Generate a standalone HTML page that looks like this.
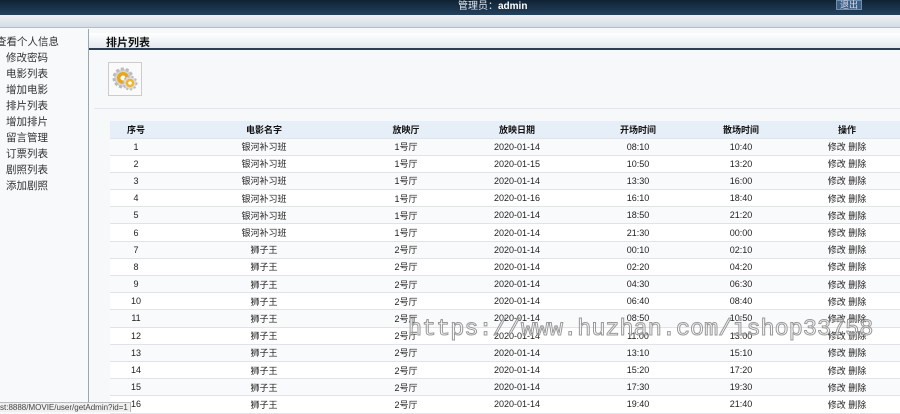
<!DOCTYPE html>
<html><head><meta charset="utf-8"><style>
*{margin:0;padding:0;box-sizing:border-box}
body{width:900px;height:412px;overflow:hidden;background:#f6f8fa;font-family:"Liberation Sans","Noto Sans CJK SC",sans-serif;position:relative;color:#222}
.top{position:absolute;left:0;top:0;width:900px;height:15px;background:linear-gradient(#0f2233,#24425e);}
.top .adm{position:absolute;left:458px;top:0;font-size:10px;color:#dfe6ee;line-height:13px}
.top .adm b{color:#fff}
.top .out{position:absolute;left:836px;top:0;width:26px;height:10px;background:#3b5f85;border:1px solid #6f8fad;color:#dde;font-size:9px;line-height:8px;text-align:center}
.band{position:absolute;left:0;top:15px;width:900px;height:13px;background:linear-gradient(#eef2f6,#d4dbe3);border-bottom:1px solid #b5bec8}
.side{position:absolute;left:0;top:29px;width:89px;height:383px;background:#f7f9fb;border-right:1px solid #9aa6b2;padding-top:5px}
.side div{font-size:10.5px;line-height:16px;color:#333;padding-left:6px}
.side div:first-child{padding-left:0;margin-left:-4px}
.ph{position:absolute;left:89px;top:33px;width:811px;height:17px;background:linear-gradient(#fff,#e4eaf0);border-bottom:2px solid #2c3e50}
.ph span{position:absolute;left:17px;top:1px;font-size:11px;font-weight:bold;color:#111}
.icon{position:absolute;left:108px;top:62px;width:34px;height:34px;border:1px solid #ccc;background:#fafafa}
.hr{position:absolute;left:94px;top:108px;width:806px;height:1px;background:#e2e6ea}
table{position:absolute;left:110px;top:121px;width:790px;border-collapse:collapse;table-layout:fixed;font-size:9px}
td,th{text-align:center;height:17.2px;border-bottom:1px solid #e0e4e8;background:#fff;padding:0;white-space:nowrap}
th{background:#e6eef7;font-weight:bold;height:17px;color:#111}
tr:nth-child(even) td{background:#f9fafb}
.wm{position:absolute;left:408px;top:316px;font-family:"Liberation Mono",monospace;font-size:23.5px;color:rgba(255,255,255,0.3);-webkit-text-stroke:1px #999;white-space:nowrap}
.st{position:absolute;left:0;top:402px;width:131px;height:10px;background:#f0f0f0;border:1px solid #bbb;border-left:none;border-bottom:none;font-size:8px;line-height:9px;color:#444;white-space:nowrap;overflow:hidden}
</style></head><body>
<div class="top"><div class="adm">管理员：<b>admin</b></div><div class="out">退出</div></div>
<div class="band"></div>
<div class="side">
<div>查看个人信息</div><div>修改密码</div><div>电影列表</div><div>增加电影</div><div>排片列表</div><div>增加排片</div><div>留言管理</div><div>订票列表</div><div>剧照列表</div><div>添加剧照</div>
</div>
<div class="ph"><span>排片列表</span></div>
<div class="icon"><svg width="34" height="34" viewBox="0 0 34 34"><circle cx="14" cy="15" r="9" fill="#d6d6d6" stroke="#bbb" stroke-dasharray="3 2" stroke-width="3"/><circle cx="14" cy="15" r="6" fill="#e9a51c"/><circle cx="14" cy="15" r="2.5" fill="#fff"/><circle cx="21" cy="20" r="6.5" fill="#ddd" stroke="#bbb" stroke-dasharray="2 2" stroke-width="2"/><circle cx="21" cy="20" r="4.3" fill="#f0b52a"/><circle cx="21" cy="20" r="1.8" fill="#fff"/></svg></div>
<div class="hr"></div>
<table>
<colgroup><col style="width:52px"><col style="width:204px"><col style="width:80px"><col style="width:142px"><col style="width:100px"><col style="width:106px"><col style="width:106px"></colgroup>
<tr><th>序号</th><th>电影名字</th><th>放映厅</th><th>放映日期</th><th>开场时间</th><th>散场时间</th><th>操作</th></tr>
<tr><td>1</td><td>银河补习班</td><td>1号厅</td><td>2020-01-14</td><td>08:10</td><td>10:40</td><td>修改 删除</td></tr>
<tr><td>2</td><td>银河补习班</td><td>1号厅</td><td>2020-01-15</td><td>10:50</td><td>13:20</td><td>修改 删除</td></tr>
<tr><td>3</td><td>银河补习班</td><td>1号厅</td><td>2020-01-14</td><td>13:30</td><td>16:00</td><td>修改 删除</td></tr>
<tr><td>4</td><td>银河补习班</td><td>1号厅</td><td>2020-01-16</td><td>16:10</td><td>18:40</td><td>修改 删除</td></tr>
<tr><td>5</td><td>银河补习班</td><td>1号厅</td><td>2020-01-14</td><td>18:50</td><td>21:20</td><td>修改 删除</td></tr>
<tr><td>6</td><td>银河补习班</td><td>1号厅</td><td>2020-01-14</td><td>21:30</td><td>00:00</td><td>修改 删除</td></tr>
<tr><td>7</td><td>狮子王</td><td>2号厅</td><td>2020-01-14</td><td>00:10</td><td>02:10</td><td>修改 删除</td></tr>
<tr><td>8</td><td>狮子王</td><td>2号厅</td><td>2020-01-14</td><td>02:20</td><td>04:20</td><td>修改 删除</td></tr>
<tr><td>9</td><td>狮子王</td><td>2号厅</td><td>2020-01-14</td><td>04:30</td><td>06:30</td><td>修改 删除</td></tr>
<tr><td>10</td><td>狮子王</td><td>2号厅</td><td>2020-01-14</td><td>06:40</td><td>08:40</td><td>修改 删除</td></tr>
<tr><td>11</td><td>狮子王</td><td>2号厅</td><td>2020-01-14</td><td>08:50</td><td>10:50</td><td>修改 删除</td></tr>
<tr><td>12</td><td>狮子王</td><td>2号厅</td><td>2020-01-14</td><td>11:00</td><td>13:00</td><td>修改 删除</td></tr>
<tr><td>13</td><td>狮子王</td><td>2号厅</td><td>2020-01-14</td><td>13:10</td><td>15:10</td><td>修改 删除</td></tr>
<tr><td>14</td><td>狮子王</td><td>2号厅</td><td>2020-01-14</td><td>15:20</td><td>17:20</td><td>修改 删除</td></tr>
<tr><td>15</td><td>狮子王</td><td>2号厅</td><td>2020-01-14</td><td>17:30</td><td>19:30</td><td>修改 删除</td></tr>
<tr><td>16</td><td>狮子王</td><td>2号厅</td><td>2020-01-14</td><td>19:40</td><td>21:40</td><td>修改 删除</td></tr>
</table>
<div class="wm">https://www.huzhan.com/ishop33758</div>
<div class="st">st:8888/MOVIE/user/getAdmin?id=1</div>
</body></html>
